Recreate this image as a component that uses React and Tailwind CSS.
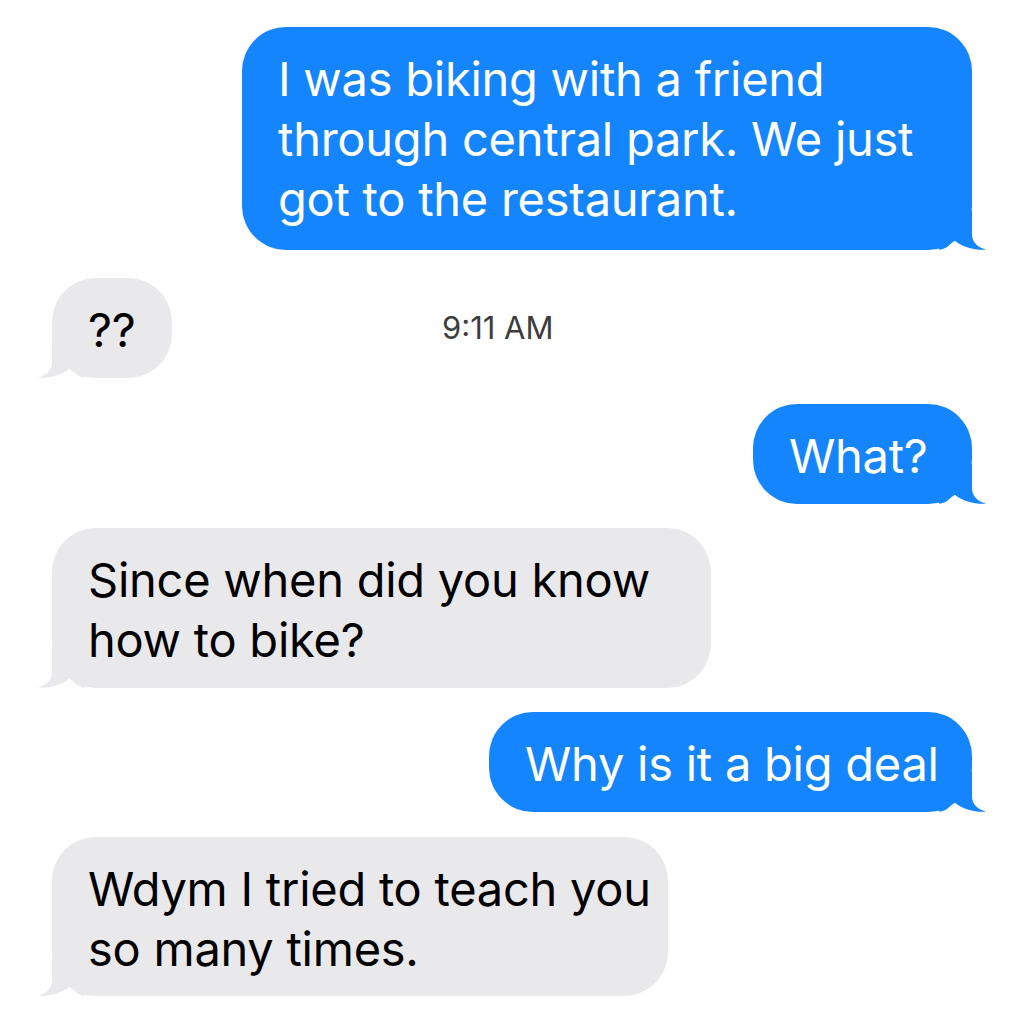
import React from 'react';

const Tail = ({ side, color }) => (
    <svg
        width="48"
        height="40"
        viewBox="0 0 48 40"
        className={side === 'right' ? 'absolute bottom-0 -right-[15px]' : 'absolute bottom-0 -left-[15px] -scale-x-100'}
    >
        <path d="M33 0 L33 24 C33 32 38 37 47 39.6 C38 40.5 24 38 15 30 C11 35 6 39.6 0 39.6 L0 0 Z" fill={color} />
    </svg>
);

const Bubble = ({ side, width, children }) => {
    const sent = side === 'right';
    const color = sent ? '#1585fd' : '#e9e9eb';
    return (
        <div
            className={`relative rounded-[44px] pt-[22px] pl-[36px] text-[47px] leading-[60px] tracking-[-0.25px] whitespace-nowrap ${
                sent ? 'bg-[#1585fd] text-white self-end' : 'bg-[#e9e9eb] text-black self-start'
            } ${width}`}
        >
            <Tail side={side} color={color} />
            <span className="relative">{children}</span>
        </div>
    );
};

const App = () => {
    return (
        <div className="w-[1024px] h-[1036px] bg-white overflow-hidden flex flex-col px-[52px] pt-[27px] font-['Inter','Liberation_Sans',sans-serif]">
            <Bubble side="right" width="w-[730px] pb-[21px]">
                I was biking with a friend
                <br />
                through central park. We just
                <br />
                got to the restaurant.
            </Bubble>

            <div className="flex items-center mt-[28px]">
                <Bubble side="left" width="w-[120px] pb-[18px]">??</Bubble>
                <span className="ml-[270px] text-[31px] text-[#3c3c3e]">9:11 AM</span>
            </div>

            <div className="flex flex-col mt-[26px]">
                <Bubble side="right" width="w-[219px] pb-[18px]">What?</Bubble>
            </div>

            <div className="flex flex-col mt-[24px]">
                <Bubble side="left" width="w-[659px] pb-[18px]">
                    Since when did you know
                    <br />
                    how to bike?
                </Bubble>
            </div>

            <div className="flex flex-col mt-[24px]">
                <Bubble side="right" width="w-[483px] pb-[18px]">Why is it a big deal</Bubble>
            </div>

            <div className="flex flex-col mt-[25px]">
                <Bubble side="left" width="w-[616px] pb-[17px]">
                    Wdym I tried to teach you
                    <br />
                    so many times.
                </Bubble>
            </div>
        </div>
    );
};

export default App;
